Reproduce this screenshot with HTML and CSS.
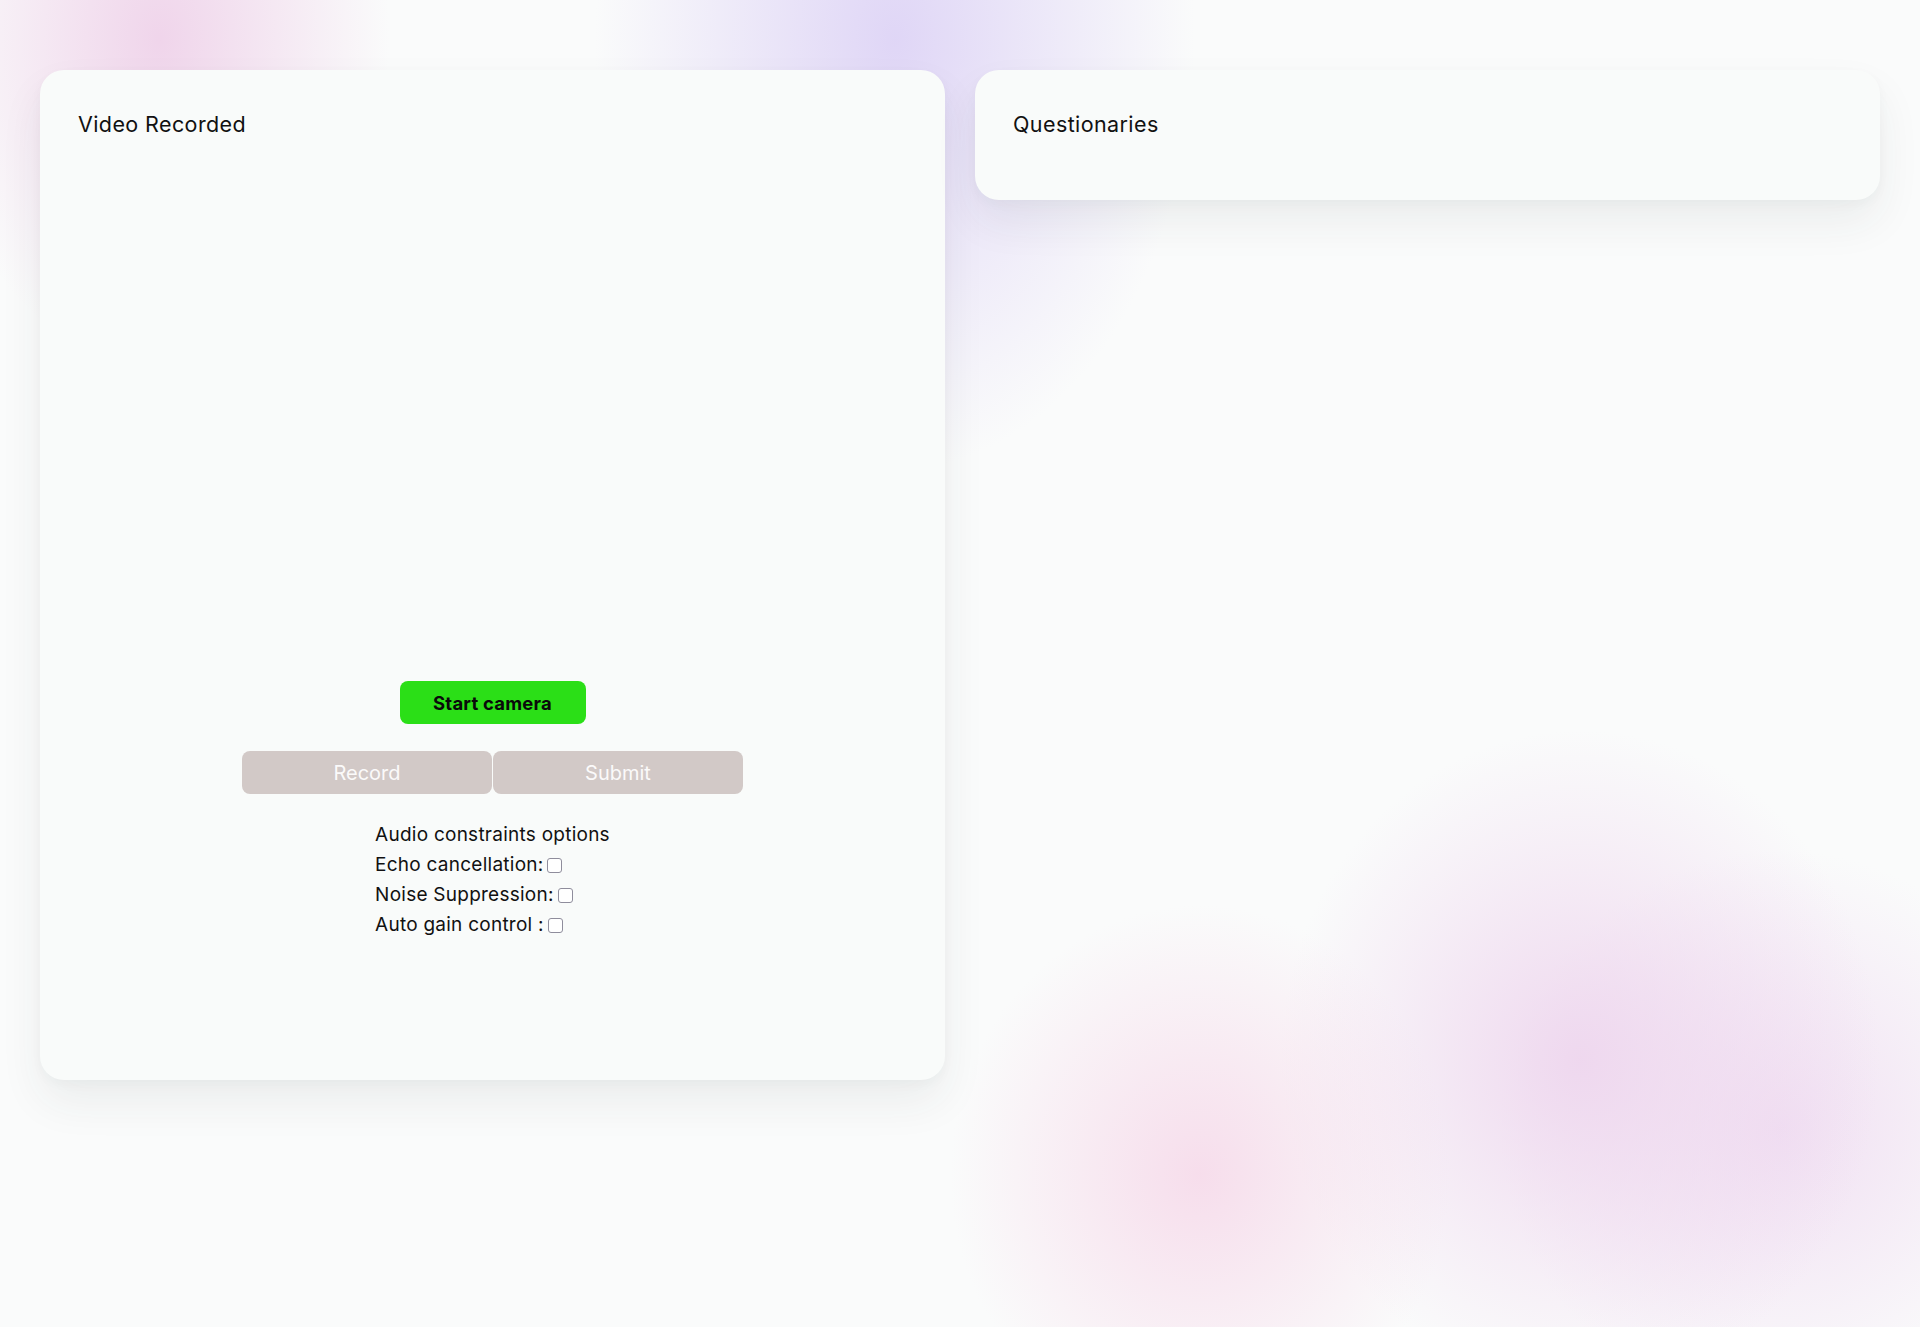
FILE: index.html
```html
<!DOCTYPE html>
<html lang="en">
<head>
<meta charset="utf-8">
<title>Video Recorder</title>
<link rel="stylesheet" href="styles.css">
</head>
<body>
<div class="bg"></div>
<main class="layout">
  <section class="card card-video">
    <h2 class="card-title">Video Recorded</h2>
    <div class="video-box"></div>
    <div class="controls">
      <button class="btn btn-start">Start camera</button>
      <div class="btn-row">
        <button class="btn btn-muted" disabled>Record</button>
        <button class="btn btn-muted" disabled>Submit</button>
      </div>
      <div class="audio">
        <div class="audio-line">Audio constraints options</div>
        <label class="audio-line">Echo cancellation:<input type="checkbox" class="check"></label>
        <label class="audio-line">Noise Suppression:<input type="checkbox" class="check"></label>
        <label class="audio-line">Auto gain control :<input type="checkbox" class="check"></label>
      </div>
    </div>
  </section>
  <section class="card card-questions">
    <h2 class="card-title">Questionaries</h2>
  </section>
</main>
</body>
</html>
```
FILE: styles.css
```css
html, body {
  margin: 0;
  padding: 0;
}
body {
  min-height: 1327px;
  background: #fafbfb;
  font-family: Inter, "Noto Sans", "Liberation Sans", sans-serif;
  color: #111;
  position: relative;
  overflow: hidden;
}
.bg {
  position: absolute;
  inset: 0;
  z-index: 0;
  background:
    radial-gradient(ellipse 230px 330px at 160px 40px, rgba(238, 206, 232, 0.85), rgba(238, 206, 232, 0) 100%),
    radial-gradient(ellipse 300px 430px at 895px 40px, rgba(222, 212, 246, 0.95), rgba(222, 212, 246, 0) 100%),
    radial-gradient(ellipse 250px 270px at 1200px 1175px, rgba(246, 218, 234, 0.9), rgba(246, 218, 234, 0) 100%),
    radial-gradient(ellipse 300px 330px at 1580px 1060px, rgba(238, 214, 238, 0.95), rgba(238, 214, 238, 0) 100%),
    radial-gradient(ellipse 280px 280px at 1780px 1130px, rgba(238, 216, 240, 0.8), rgba(238, 216, 240, 0) 100%);
}
.layout {
  position: relative;
  z-index: 1;
  display: flex;
  align-items: flex-start;
  gap: 30px;
  padding: 70px 40px 0 40px;
}
.card {
  flex: 1 1 0;
  box-sizing: border-box;
  background: #f9fbfa;
  border-radius: 24px;
  box-shadow: 0 22px 44px rgba(40, 50, 60, 0.07), 0 4px 12px rgba(40, 50, 60, 0.03);
  padding: 41px 38px 0 38px;
}
.card-video {
  height: 1010px;
}
.card-questions {
  height: 130px;
}
.card-title {
  margin: 0;
  font-size: 21.5px;
  line-height: 26px;
  font-weight: 400;
  letter-spacing: 0.4px;
  color: #111;
}
.video-box {
  height: 544px;
}
.controls {
  display: flex;
  flex-direction: column;
  align-items: center;
}
.btn {
  font-family: inherit;
  border: none;
  margin: 0;
  padding: 0;
  height: 43px;
  border-radius: 8px;
  cursor: pointer;
}
.btn-start {
  width: 186px;
  background: #2bdf17;
  color: #0a0a0a;
  font-size: 18.5px;
  font-weight: 700;
  letter-spacing: 0.2px;
}
.btn-row {
  display: flex;
  gap: 1px;
  margin-top: 27px;
}
.btn-muted {
  width: 250px;
  background: #d2c9c7;
  color: #fbfafa;
  font-size: 20px;
  font-weight: 400;
  cursor: default;
}
.audio {
  margin-top: 26px;
  display: flex;
  flex-direction: column;
  font-size: 19px;
  letter-spacing: 0.25px;
  line-height: 30px;
  color: #111;
}
.audio-line {
  display: flex;
  align-items: center;
}
.check {
  appearance: none;
  -webkit-appearance: none;
  width: 15px;
  height: 15px;
  margin: 0 0 0 4px;
  box-sizing: border-box;
  border: 1.5px solid #8f8d9c;
  border-radius: 3px;
  background: #fff;
}
```
